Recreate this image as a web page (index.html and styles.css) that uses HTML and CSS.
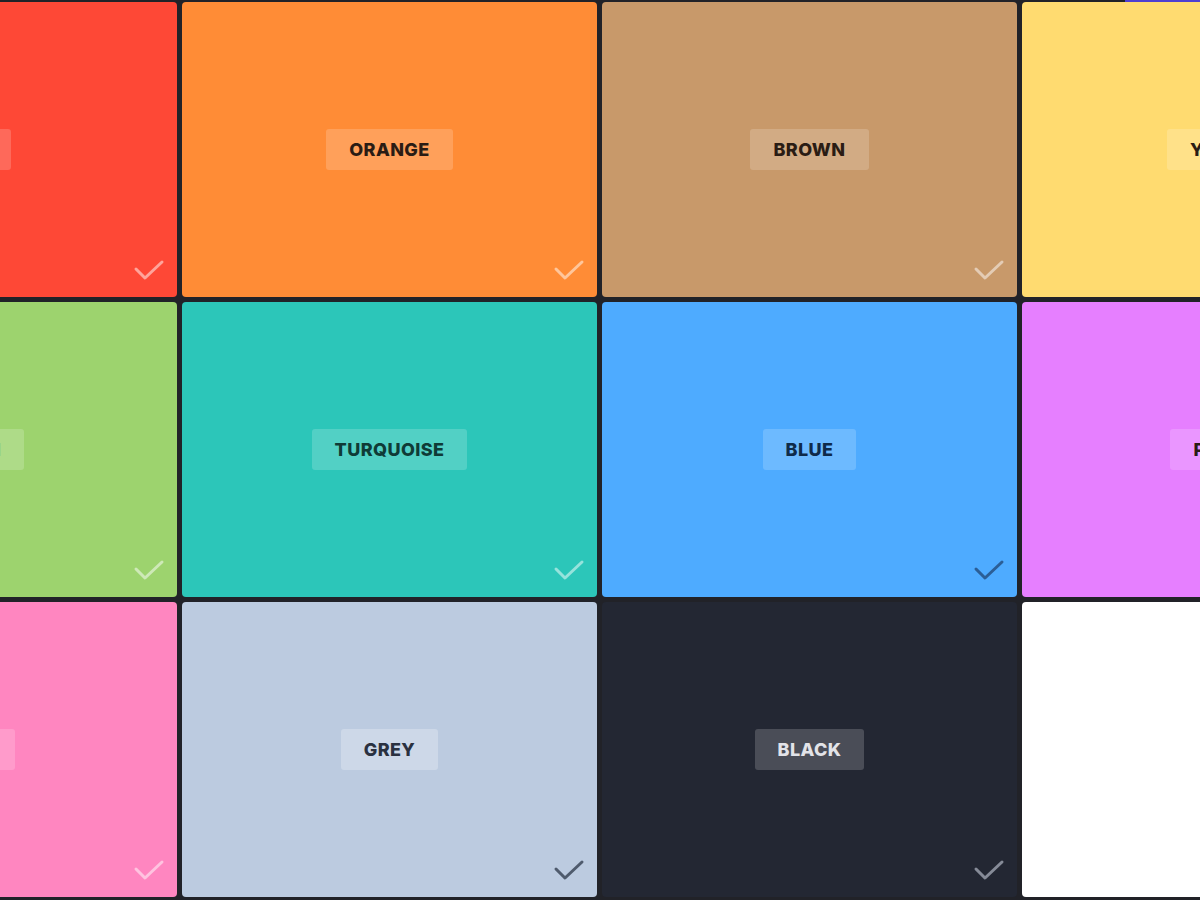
FILE: index.html
```html
<!DOCTYPE html>
<html>
<head>
<meta charset="utf-8">
<link rel="stylesheet" href="styles.css">
</head>
<body>
<div class="topbar"></div>
<div class="grid">
  <div class="tile red"><span class="label">RED</span><svg class="check" viewBox="0 0 32 24"><polyline points="3,11 12,20 29,4"/></svg></div>
  <div class="tile orange"><span class="label">ORANGE</span><svg class="check" viewBox="0 0 32 24"><polyline points="3,11 12,20 29,4"/></svg></div>
  <div class="tile brown"><span class="label">BROWN</span><svg class="check" viewBox="0 0 32 24"><polyline points="3,11 12,20 29,4"/></svg></div>
  <div class="tile yellow"><span class="label">YELLOW</span><svg class="check" viewBox="0 0 32 24"><polyline points="3,11 12,20 29,4"/></svg></div>
  <div class="tile green"><span class="label">GREEN</span><svg class="check" viewBox="0 0 32 24"><polyline points="3,11 12,20 29,4"/></svg></div>
  <div class="tile turquoise"><span class="label">TURQUOISE</span><svg class="check" viewBox="0 0 32 24"><polyline points="3,11 12,20 29,4"/></svg></div>
  <div class="tile blue"><span class="label">BLUE</span><svg class="check" viewBox="0 0 32 24"><polyline points="3,11 12,20 29,4"/></svg></div>
  <div class="tile purple"><span class="label">PURPLE</span><svg class="check" viewBox="0 0 32 24"><polyline points="3,11 12,20 29,4"/></svg></div>
  <div class="tile pink"><span class="label">PINK</span><svg class="check" viewBox="0 0 32 24"><polyline points="3,11 12,20 29,4"/></svg></div>
  <div class="tile grey"><span class="label">GREY</span><svg class="check" viewBox="0 0 32 24"><polyline points="3,11 12,20 29,4"/></svg></div>
  <div class="tile black"><span class="label">BLACK</span><svg class="check" viewBox="0 0 32 24"><polyline points="3,11 12,20 29,4"/></svg></div>
  <div class="tile white"><span class="label">WHITE</span><svg class="check" viewBox="0 0 32 24"><polyline points="3,11 12,20 29,4"/></svg></div>
</div>
</body>
</html>
```
FILE: styles.css
```css
html, body {
  margin: 0;
  padding: 0;
  width: 1200px;
  height: 900px;
  overflow: hidden;
  background: #212228;
  font-family: Inter, "Liberation Sans", sans-serif;
}
.topbar {
  position: absolute;
  top: 0;
  left: 1125px;
  width: 75px;
  height: 2px;
  background: #4f3fd0;
}
.grid {
  display: grid;
  grid-template-columns: repeat(4, 415px);
  grid-auto-rows: 295px;
  gap: 5px;
  padding-top: 2px;
  margin-left: -238px;
  width: 1675px;
}
.tile {
  position: relative;
  border-radius: 4px;
  display: flex;
  align-items: center;
  justify-content: center;
}
.label {
  background: rgba(255, 255, 255, 0.18);
  border-radius: 3px;
  padding: 0 23px;
  height: 41px;
  line-height: 41px;
  font-size: 18px;
  font-weight: 800;
  letter-spacing: 0.4px;
  color: #2a1c14;
}
.check {
  position: absolute;
  right: 12px;
  bottom: 15px;
  width: 32px;
  height: 24px;
  fill: none;
  stroke: rgba(255, 255, 255, 0.5);
  stroke-width: 3;
  stroke-linecap: round;
  stroke-linejoin: round;
}
.red { background: #fe4836; }
.orange { background: #ff8c36; }
.brown { background: #c8996a; }
.yellow { background: #ffdb70; }
.green { background: #9dd36e; }
.turquoise { background: #2cc6b9; }
.blue { background: #4eabff; }
.purple { background: #e67fff; }
.pink { background: #ff86c0; }
.grey { background: #bccbe0; }
.black { background: #232733; }
.white { background: #ffffff; }
.turquoise .label { color: #0f3b37; }
.blue .label { color: #0f2b4a; }
.grey .label { color: #2a3140; background: rgba(255,255,255,0.25); }
.black .label { color: #e2e3e8; background: rgba(255,255,255,0.18); }
.blue .check { stroke: #2b5e96; }
.grey .check { stroke: #4f5b6d; }
.black .check { stroke: #868b98; }
.white .check { stroke: #c9ccd4; }
.white .label { color: #222; padding-left: 30px; }
```
